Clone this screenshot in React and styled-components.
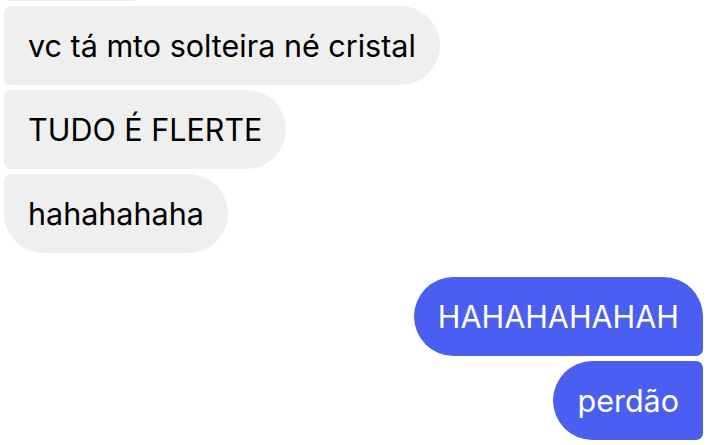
import React from "react";
import styled, { createGlobalStyle, css } from "styled-components";

const GlobalStyle = createGlobalStyle`
  html, body {
    margin: 0;
    padding: 0;
    background: #ffffff;
    overflow: hidden;
  }
  body {
    font-family: Inter, "Noto Sans", "Liberation Sans", sans-serif;
  }
`;

const Thread = styled.div`
  display: flex;
  flex-direction: column;
  margin-top: -78px;
  padding: 0 16px 0 4px;
`;

const Group = styled.div`
  display: flex;
  flex-direction: column;
  align-items: ${(p) => (p.mine ? "flex-end" : "flex-start")};
  gap: 5px;
  & + & {
    margin-top: 24px;
  }
`;

const Bubble = styled.div`
  box-sizing: border-box;
  height: 79px;
  display: flex;
  align-items: center;
  padding: 0 24px;
  font-size: 30.5px;
  white-space: nowrap;
  ${(p) =>
    p.mine
      ? css`
          background: #4a5ef1;
          color: #ffffff;
          border-radius: 40px ${p.first ? "40px" : "7px"} 7px 40px;
        `
      : css`
          background: #efefef;
          color: #000000;
          border-radius: 7px 40px 40px ${p.last ? "40px" : "7px"};
        `}
  ${(p) => p.width && css`width: ${p.width}px;`}
`;

export default function App() {
  return (
    <>
      <GlobalStyle />
      <Thread>
        <Group>
          <Bubble width={163} />
          <Bubble>vc tá mto solteira né cristal</Bubble>
          <Bubble>TUDO É FLERTE</Bubble>
          <Bubble last>hahahahaha</Bubble>
        </Group>
        <Group mine>
          <Bubble mine first>HAHAHAHAHAH</Bubble>
          <Bubble mine>perdão</Bubble>
        </Group>
      </Thread>
    </>
  );
}
